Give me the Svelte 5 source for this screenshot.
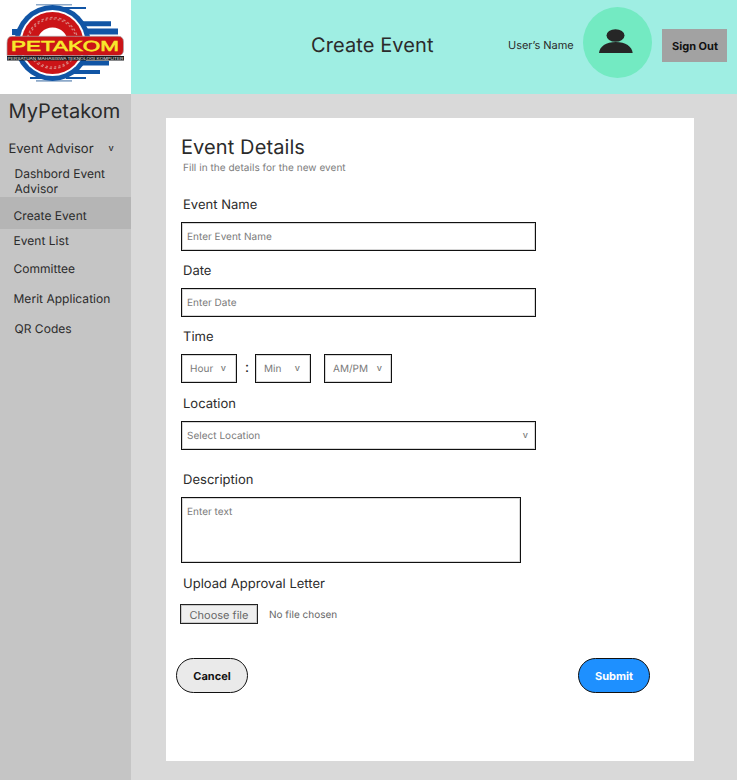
<script>
  const links = [
    { label: 'Dashbord Event Advisor', cls: 'dash' },
    { label: 'Create Event', cls: 'active' },
    { label: 'Event List', cls: 'list' },
    { label: 'Committee', cls: 'committee' },
    { label: 'Merit Application', cls: 'merit' },
    { label: 'QR Codes', cls: 'qr' }
  ];
</script>

<div class="app">
  <header>
    <div class="logo">
      <svg width="131" height="94" viewBox="0 0 131 94">
        <g fill="#1155a5">
          <path d="M36 4h36v1.600H36z" fill="#8da9c9" />
          <path d="M36 80h36v1.800H36z" fill="#8da9c9" />
          <path d="M56 7h30v2H56zM71 21.200h40v5H71zM80 28.600h38v6H80zM12 29h11v6H12zM80 61h29v4.500H80zM74 70h26v4H74zM66 77h20v2H66zM30 77h14v2H30z" />
          <circle cx="52.500" cy="43" r="38" />
        </g>
        <circle cx="52.500" cy="43" r="33" fill="#fff" />
        <circle cx="52.500" cy="43" r="31" fill="#cb1417" />
        <circle cx="52.500" cy="43" r="25.500" fill="none" stroke="#d9807c" stroke-width="1.300" stroke-dasharray="2.500 2" />
        <circle cx="52.500" cy="43" r="24" fill="none" stroke="#d9807c" stroke-width="1.200" stroke-dasharray="2 2.200" />
        <circle cx="52.500" cy="43" r="15.500" fill="#fff" />
        <path d="M12 36.300H118Q123.500 36.300 123.500 42V50Q123.500 55.500 118 55.500H7V43Q7 36.300 12 36.300Z" fill="#cb1417" stroke="#a9a3a8" stroke-width=".7" />
        <path d="M7 56h117v4.600H7z" fill="#17181c" />
        <text x="11" y="50.900" textLength="108" lengthAdjust="spacingAndGlyphs" class="brand">PETAKOM</text>
        <text x="7.500" y="59.800" textLength="116" lengthAdjust="spacingAndGlyphs" class="motto">PERSATUAN MAHASISWA TEKNOLOGI KOMPUTER</text>
      </svg>
    </div>
    <h1>Create Event</h1>
    <span class="user">User’s Name</span>
    <div class="avatar">
      <svg width="69" height="71" viewBox="0 0 69 71">
        <ellipse cx="34.500" cy="35.500" rx="34.500" ry="35.500" fill="#73eac2" />
        <ellipse cx="32.500" cy="28.500" rx="9" ry="6.300" fill="#262626" />
        <path d="M16 46C16.500 39.500 23 35 32.800 35S49 39.500 49.700 46Z" fill="#262626" />
      </svg>
    </div>
    <button class="signout">Sign Out</button>
  </header>

  <div class="body">
    <nav>
      <div class="title">MyPetakom</div>
      <div class="group"><span>Event Advisor</span><span class="v">v</span></div>
      {#each links as link}
        <div class="link {link.cls}">{link.label}</div>
      {/each}
    </nav>

    <main>
      <section class="card">
        <h2>Event Details</h2>
        <p class="hint">Fill in the details for the new event</p>

        <div class="label l1">Event Name</div>
        <div class="box wide">Enter Event Name</div>

        <div class="label l2">Date</div>
        <div class="box wide">Enter Date</div>

        <div class="label l3">Time</div>
        <div class="time">
          <div class="box hour"><span>Hour</span><span class="v">v</span></div>
          <span class="colon">:</span>
          <div class="box min"><span>Min</span><span class="v">v</span></div>
          <div class="box ampm"><span>AM/PM</span><span class="v">v</span></div>
        </div>

        <div class="label l4">Location</div>
        <div class="box wide select"><span>Select Location</span><span class="v">v</span></div>

        <div class="label l5">Description</div>
        <div class="box area">Enter text</div>

        <div class="label l6">Upload Approval Letter</div>
        <div class="file"><span class="choose">Choose file</span><span class="none">No file chosen</span></div>

        <div class="actions">
          <button class="cancel">Cancel</button>
          <button class="submit">Submit</button>
        </div>
      </section>
    </main>
  </div>
</div>

<style>
  :global(body) { margin: 0; }
  .app { width: 737px; height: 780px; display: flex; flex-direction: column; overflow: hidden; background: #d9d9d9; font-family: Inter, sans-serif; font-weight: 400; color: #2b2b2b; text-rendering: geometricPrecision; }
  .app * { box-sizing: border-box; white-space: nowrap; }
  svg { display: block; }
  header { height: 94px; flex: none; display: flex; background: #9feee3; }
  .logo { width: 131px; height: 94px; background: #fff; }
  .brand { font: 400 14.500px "Liberation Sans", sans-serif; fill: #f8e92c; stroke: #f8e92c; stroke-width: .6; }
  .motto { font: 400 4.400px "Liberation Sans", sans-serif; fill: #e4e4e4; }
  h1, h2 { margin: 0; font-size: 20px; font-weight: 400; line-height: 24px; letter-spacing: .1px; }
  h1 { width: 197px; margin: 33px 0 0 180px; }
  .user { width: 75px; margin-top: 38px; font-size: 11px; line-height: 15px; letter-spacing: -.04px; }
  .avatar { margin-top: 7px; }
  button { padding: 0; font-family: inherit; font-weight: 700; font-size: 11px; color: #111; text-rendering: inherit; }
  .signout { width: 65px; height: 33px; margin: 29px 0 0 10px; border: 0; background: #a2a2a2; line-height: 34px; padding-left: 1px; }
  .body { flex: 1; display: flex; }
  nav { width: 131px; background: #c5c5c5; }
  .title { margin: 5px 0 0 8.500px; font-size: 20px; line-height: 24px; }
  .group { display: flex; margin: 17px 0 0 8.500px; font-size: 13px; line-height: 18px; }
  .v { font-size: 9px; font-weight: 500; }
  .group .v { margin-left: 15px; line-height: 18px; }
  .link { padding-left: 13.500px; font-size: 12px; line-height: 15px; letter-spacing: .03px; }
  .link.dash { width: 120px; margin-top: 8px; padding-left: 14.500px; white-space: normal; }
  .link.active { height: 32px; margin-top: 1px; background: #b5b5b5; line-height: 37px; }
  .link.list { margin-top: 4px; }
  .link.committee { margin-top: 13px; }
  .link.merit { margin-top: 15px; }
  .link.qr { margin-top: 15px; padding-left: 14.500px; }
  main { padding: 24px 0 0 35px; }
  .card { width: 528px; height: 643px; padding: 17px 0 0 15px; background: #fff; }
  .hint { margin: 0 0 0 2px; font-size: 10px; line-height: 18px; height: 16px; letter-spacing: .04px; color: #7c7c7c; }
  .label { margin-left: 2px; font-size: 13px; line-height: 18px; height: 16px; letter-spacing: .02px; }
  .box { height: 29px; border: 1px solid #111; box-shadow: inset 0 0 0 1px rgba(0, 0, 0, .16); padding-left: 5px; font-size: 10px; line-height: 28px; letter-spacing: .02px; color: #7a7a7a; }
  .wide { width: 355px; }
  .l1 { margin-top: 21px; margin-bottom: 10px; }
  .l2 { margin-top: 11px; margin-bottom: 10px; }
  .l3 { margin-top: 11px; margin-bottom: 10px; }
  .l4 { margin-top: 13px; margin-bottom: 9px; line-height: 17px; }
  .l5 { margin-top: 22px; margin-bottom: 9px; line-height: 17px; }
  .l6 { margin-top: 12px; margin-bottom: 13px; }
  .time { display: flex; }
  .time .box, .select { display: flex; justify-content: space-between; }
  .time .hour { width: 56px; padding: 0 10px 0 8px; }
  .time .min { width: 56px; padding: 0 10px 0 8px; }
  .time .ampm { width: 68px; margin-left: 13px; padding: 0 9px 0 8px; }
  .colon { width: 18px; text-align: center; font-size: 14px; font-weight: 400; line-height: 27px; padding-left: 2px; }
  .select { padding-right: 7px; }
  .area { width: 340px; height: 66px; }
  .file { display: flex; margin-left: -1px; height: 21px; color: #666; }
  .choose { width: 78px; height: 20px; border: 1px solid #222; box-shadow: inset 0 0 0 1px rgba(0, 0, 0, .16); background: #efefef; text-align: center; font-size: 11px; line-height: 20px; }
  .none { margin-left: 11px; font-size: 10px; line-height: 22px; }
  .actions { display: flex; justify-content: space-between; width: 474px; margin: 32.500px 0 0 -5px; }
  .actions button { width: 72px; height: 35.500px; border: 1px solid #111; border-radius: 18px; line-height: 35px; }
  .actions .cancel { background: #eaeaea; }
  .actions .submit { background: #1e90ff; color: #fff; }
</style>
